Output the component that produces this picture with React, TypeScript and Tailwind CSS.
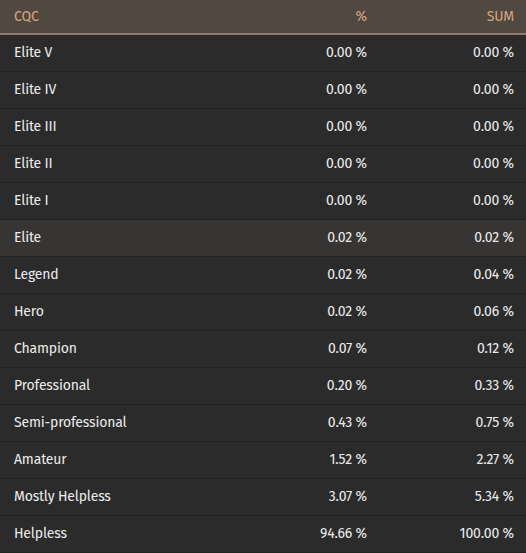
const ROWS: [string, string, string][] = [
  ["Elite V", "0.00 %", "0.00 %"],
  ["Elite IV", "0.00 %", "0.00 %"],
  ["Elite III", "0.00 %", "0.00 %"],
  ["Elite II", "0.00 %", "0.00 %"],
  ["Elite I", "0.00 %", "0.00 %"],
  ["Elite", "0.02 %", "0.02 %"],
  ["Legend", "0.02 %", "0.04 %"],
  ["Hero", "0.02 %", "0.06 %"],
  ["Champion", "0.07 %", "0.12 %"],
  ["Professional", "0.20 %", "0.33 %"],
  ["Semi-professional", "0.43 %", "0.75 %"],
  ["Amateur", "1.52 %", "2.27 %"],
  ["Mostly Helpless", "3.07 %", "5.34 %"],
  ["Helpless", "94.66 %", "100.00 %"],
];

export default function App() {
  return (
    <div
      className="h-[553px] w-[526px] overflow-hidden bg-[#2b2b2b] text-[14px] tracking-[-0.012em]"
      style={{ fontFamily: "'Fira Sans', Lato, 'Open Sans', sans-serif" }}
    >
      <div className="grid h-[35px] grid-cols-[1fr_147px_147px] items-center border-b-2 border-[#8c7b6b] bg-[#51483f] text-[#d6a37e]">
        <div className="pl-[14px]">CQC</div>
        <div className="pr-3 text-right">%</div>
        <div className="pr-3 text-right">SUM</div>
      </div>
      {ROWS.map(([name, pct, sum]) => (
        <div
          key={name}
          className={
            "grid h-[37px] grid-cols-[1fr_147px_147px] items-center border-b border-[#212121] pb-[2px] text-[#ebebeb] " +
            (name === "Elite" ? "bg-[#373533]" : "bg-[#2b2b2b]")
          }
        >
          <div className="pl-[14px]">{name}</div>
          <div className="pr-3 text-right">{pct}</div>
          <div className="pr-3 text-right">{sum}</div>
        </div>
      ))}
    </div>
  );
}
